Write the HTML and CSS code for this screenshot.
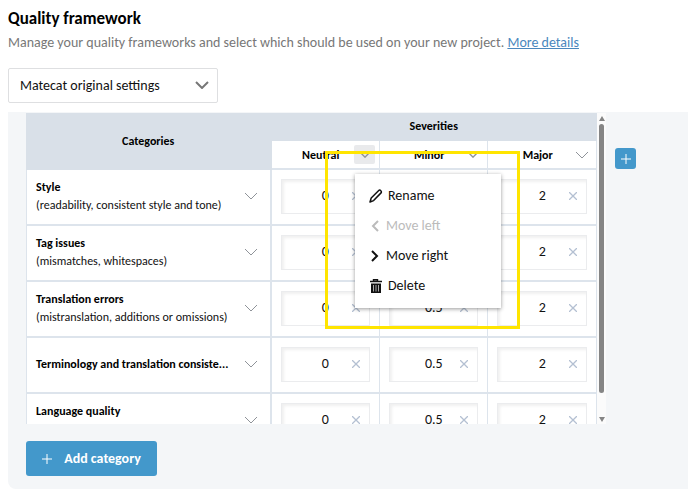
FILE: index.html
```html
<!DOCTYPE html>
<html lang="en">
<head>
<meta charset="utf-8">
<meta name="viewport" content="width=device-width, initial-scale=1">
<title>Quality framework</title>
<link rel="stylesheet" href="styles.css">
</head>
<body>
<svg class="sprite" aria-hidden="true">
  <symbol id="chevron" viewBox="0 0 14 8"><path d="M1 1l6 6 6-6" fill="none" stroke="currentColor"/></symbol>
  <symbol id="cross" viewBox="0 0 8 8"><path d="M0 0l8 8M8 0L0 8" fill="none" stroke="currentColor"/></symbol>
  <symbol id="plus" viewBox="0 0 10 10"><path d="M5 0v10M0 5h10" fill="none" stroke="currentColor"/></symbol>
</svg>
<main class="page">
  <header class="intro">
    <h1>Quality framework</h1>
    <p>Manage your quality frameworks and select which should be used on your new project. <a href="#">More details</a></p>
  </header>
  <div class="select">
    <select aria-label="Quality framework"><option>Matecat original settings</option></select>
    <svg class="select-arrow"><use href="#chevron"/></svg>
  </div>
  <section class="panel">
    <div class="editor">
      <div class="viewport">
        <table>
          <colgroup><col class="col-category"><col class="col-severity"><col class="col-severity"><col class="col-severity"></colgroup>
          <thead>
            <tr><th class="group" rowspan="2">Categories</th><th class="group" colspan="3">Severities</th></tr>
            <tr class="severities">
              <th><div class="severity"><span>Neutral</span><button class="toggle small active" aria-label="Neutral options"><svg><use href="#chevron"/></svg></button></div></th>
              <th><div class="severity"><span>Minor</span><button class="toggle small" aria-label="Minor options"><svg><use href="#chevron"/></svg></button></div></th>
              <th><div class="severity"><span>Major</span><button class="toggle" aria-label="Major options"><svg><use href="#chevron"/></svg></button></div></th>
            </tr>
          </thead>
          <tbody>
            <tr>
              <td><div class="category"><div class="label"><strong>Style</strong><span>(readability, consistent style and tone)</span></div><button class="toggle" aria-label="Style options"><svg><use href="#chevron"/></svg></button></div></td>
              <td><div class="value"><input aria-label="Style neutral" value="0"><button aria-label="Clear"><svg><use href="#cross"/></svg></button></div></td>
              <td><div class="value"><input aria-label="Style minor" value="0.5"><button aria-label="Clear"><svg><use href="#cross"/></svg></button></div></td>
              <td><div class="value"><input aria-label="Style major" value="2"><button aria-label="Clear"><svg><use href="#cross"/></svg></button></div></td>
            </tr>
            <tr>
              <td><div class="category"><div class="label"><strong>Tag issues</strong><span>(mismatches, whitespaces)</span></div><button class="toggle" aria-label="Tag issues options"><svg><use href="#chevron"/></svg></button></div></td>
              <td><div class="value"><input aria-label="Tag issues neutral" value="0"><button aria-label="Clear"><svg><use href="#cross"/></svg></button></div></td>
              <td><div class="value"><input aria-label="Tag issues minor" value="0.5"><button aria-label="Clear"><svg><use href="#cross"/></svg></button></div></td>
              <td><div class="value"><input aria-label="Tag issues major" value="2"><button aria-label="Clear"><svg><use href="#cross"/></svg></button></div></td>
            </tr>
            <tr>
              <td><div class="category"><div class="label"><strong>Translation errors</strong><span>(mistranslation, additions or omissions)</span></div><button class="toggle" aria-label="Translation errors options"><svg><use href="#chevron"/></svg></button></div></td>
              <td><div class="value"><input aria-label="Translation errors neutral" value="0"><button aria-label="Clear"><svg><use href="#cross"/></svg></button></div></td>
              <td><div class="value"><input aria-label="Translation errors minor" value="0.5"><button aria-label="Clear"><svg><use href="#cross"/></svg></button></div></td>
              <td><div class="value"><input aria-label="Translation errors major" value="2"><button aria-label="Clear"><svg><use href="#cross"/></svg></button></div></td>
            </tr>
            <tr>
              <td><div class="category"><div class="label"><strong>Terminology and translation consiste...</strong></div><button class="toggle" aria-label="Terminology options"><svg><use href="#chevron"/></svg></button></div></td>
              <td><div class="value"><input aria-label="Terminology neutral" value="0"><button aria-label="Clear"><svg><use href="#cross"/></svg></button></div></td>
              <td><div class="value"><input aria-label="Terminology minor" value="0.5"><button aria-label="Clear"><svg><use href="#cross"/></svg></button></div></td>
              <td><div class="value"><input aria-label="Terminology major" value="2"><button aria-label="Clear"><svg><use href="#cross"/></svg></button></div></td>
            </tr>
            <tr>
              <td><div class="category"><div class="label"><strong>Language quality</strong><span></span></div><button class="toggle" aria-label="Language quality options"><svg><use href="#chevron"/></svg></button></div></td>
              <td><div class="value"><input aria-label="Language quality neutral" value="0"><button aria-label="Clear"><svg><use href="#cross"/></svg></button></div></td>
              <td><div class="value"><input aria-label="Language quality minor" value="0.5"><button aria-label="Clear"><svg><use href="#cross"/></svg></button></div></td>
              <td><div class="value"><input aria-label="Language quality major" value="2"><button aria-label="Clear"><svg><use href="#cross"/></svg></button></div></td>
            </tr>
          </tbody>
        </table>
      </div>
      <div class="scrollbar" aria-hidden="true">
        <svg viewBox="0 0 6 5"><path d="M3 0l3 5H0z"/></svg>
        <div class="thumb"></div>
        <svg viewBox="0 0 6 5"><path d="M3 5l3-5H0z"/></svg>
      </div>
      <button class="add-severity" aria-label="Add severity"><svg><use href="#plus"/></svg></button>
      <div class="menu">
        <button><svg viewBox="0 0 14 14"><path d="M1 13l1.200-4 7.300-7.300q1.200-1.200 2.300 0 1.200 1.200 0 2.400L4.600 11.600z" fill="none" stroke="currentColor" stroke-width="1.500" stroke-linejoin="round"/></svg>Rename</button>
        <button class="arrow" disabled><svg viewBox="0 0 12 14"><path d="M9 2L4 7l5 5" fill="none" stroke="currentColor" stroke-width="2"/></svg>Move left</button>
        <button class="arrow"><svg viewBox="0 0 12 14"><path d="M3 2l5 5-5 5" fill="none" stroke="currentColor" stroke-width="2"/></svg>Move right</button>
        <button><svg viewBox="0 0 14 14"><path d="M1 2.500h12M4.500 2V.7h4V2" fill="none" stroke="currentColor" stroke-width="1.400"/><path d="M2 4.500h10V14H2z" fill="currentColor"/><path d="M4.500 6v6.500M7 6v6.500M9.500 6v6.500" stroke="#aaa"/></svg>Delete</button>
      </div>
      <div class="highlight"></div>
    </div>
    <button class="add-category"><svg><use href="#plus"/></svg>Add category</button>
  </section>
</main>
</body>
</html>
```
FILE: styles.css
```css
* { box-sizing: border-box; }

body {
  margin: 0;
  background: #fff;
  color: #111;
  font: 14px/18px Calibri, Carlito, Lato, sans-serif;
}

button, input, select { font: inherit; color: inherit; }
button { padding: 0; border: 0; background: none; }
svg { display: block; flex: none; }
.sprite { position: absolute; width: 0; height: 0; }

.page { padding: 8px 0 0 8px; }
h1 { margin: 0; font-size: 17px; line-height: 22px; color: #000; }
.intro p { margin: 3px 0 0; line-height: 20px; color: #777; }
.intro a { color: #4a87bd; }

.select { position: relative; width: 210px; margin: 15px 0 9px; }
.select select {
  display: block;
  width: 100%;
  height: 35px;
  padding: 0 32px 0 11px;
  appearance: none;
  border: 1px solid #dedfe1;
  border-radius: 2px;
  background: #fff;
}
.select-arrow {
  position: absolute;
  right: 9px;
  top: 13px;
  width: 14px;
  height: 8px;
  color: #777;
  stroke-width: 2;
}

.panel {
  padding: 1px 52px 13px 18px;
  border-radius: 0 0 0 8px;
  background: #f4f6f8;
}
.editor { position: relative; display: flex; height: 311px; }
.viewport { flex: 1; min-width: 0; overflow: hidden; }

table {
  width: 100%;
  table-layout: fixed;
  border-collapse: separate;
  border-spacing: 0;
  background: #fff;
  font-size: 12px;
}
.col-category { width: 43%; }
.col-severity { width: 19%; }
th, td { padding: 0; border: 0 solid #dde4ec; border-right-width: 1px; border-bottom-width: 2px; }
td:first-child { border-left-width: 1px; border-right-width: 2px; }
th { height: 29px; color: #000; }
th.group { height: 28px; padding-bottom: 2px; border-color: #d9e0e8; border-bottom-width: 0; background: #d9e0e8; }
td { height: 56px; padding-bottom: 2px; }

.severity { display: flex; align-items: center; padding: 0 4px 0 16px; }
.severity span { flex: 1; }
.toggle { display: grid; place-items: center; width: 21px; height: 19px; border-radius: 2px; color: #8f9399; }
.toggle svg { width: 14px; height: 8px; }
.toggle.small svg { width: 10px; height: 6px; stroke-width: 2; }
.toggle.active { background: #e9eaec; }

.category { display: flex; align-items: center; justify-content: space-between; padding: 0 8px 0 9px; }
.label { min-width: 0; }
.label strong { display: block; white-space: nowrap; color: #000; }
.label span { display: block; min-height: 18px; white-space: nowrap; }

.value {
  display: grid;
  grid-template-columns: 1fr auto;
  align-items: center;
  height: 35px;
  margin: 0 9px;
  padding-right: 9px;
  border: 1px solid #ebecee;
  box-shadow: inset 2px 2px 3px #f0f0f0;
}
.value input {
  width: 100%;
  padding: 0 0 0 17px;
  border: 0;
  outline: 0;
  background: none;
  text-align: center;
  font-size: 14px;
}
.value button { color: #b4c0d2; stroke-width: 1.300; }
.value svg { width: 8px; height: 8px; }

.scrollbar {
  display: flex;
  flex-direction: column;
  align-items: center;
  gap: 3px;
  width: 9px;
  padding: 3px 0 2px;
  background: #fbfbfb;
  fill: #858585;
}
.scrollbar svg { width: 6px; height: 5px; }
.thumb { width: 5px; height: 269px; margin-bottom: auto; border-radius: 3px; background: #858585; }

.add-severity {
  display: grid;
  place-items: center;
  width: 21px;
  height: 21px;
  margin: 35px 0 0 9px;
  border-radius: 3px;
  background: #4398cb;
  color: #fff;
}
.add-severity svg, .add-category svg { width: 10px; height: 10px; }

.menu {
  position: absolute;
  left: 329px;
  top: 61px;
  width: 146px;
  padding: 7px 0;
  background: #fff;
  box-shadow: 0 1px 4px rgba(0, 0, 0, .4);
}
.menu button { display: flex; align-items: center; gap: 5px; width: 100%; height: 30px; padding-left: 14px; }
.menu svg { width: 14px; height: 14px; }
.menu .arrow svg { width: 12px; }
.menu button:disabled { color: #bbb; }

.highlight {
  position: absolute;
  left: 299px;
  top: 38px;
  width: 195px;
  height: 178px;
  border: 3px solid #ffe500;
}

.add-category {
  display: flex;
  align-items: center;
  justify-content: center;
  gap: 12px;
  width: 131px;
  height: 35px;
  margin-top: 17px;
  border-radius: 3px;
  background: #4398cb;
  color: #fff;
  font-weight: 700;
}
```
